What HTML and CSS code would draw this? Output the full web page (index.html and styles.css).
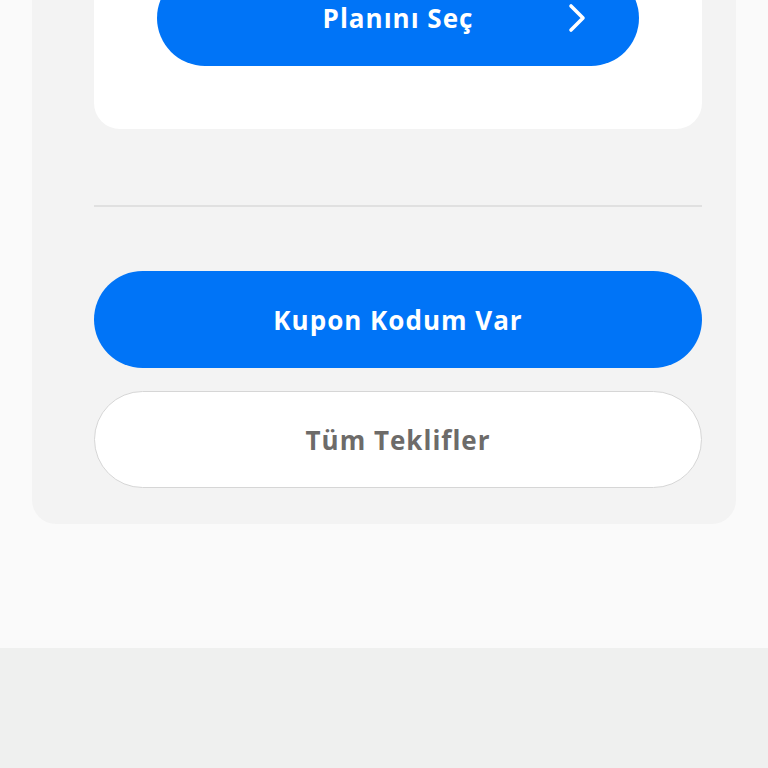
FILE: index.html
```html
<!DOCTYPE html>
<html lang="tr">
<head>
    <meta charset="UTF-8">
    <meta name="viewport" content="width=device-width, initial-scale=1.0">
    <title>Planlar</title>
    <link rel="stylesheet" href="styles.css">
</head>
<body>
    <div class="page">
        <div class="offer-panel">
            <div class="plan-card">
                <button class="btn btn-primary plan-button">
                    Planını Seç
                    <svg class="chevron" width="20" height="30" viewBox="0 0 20 30">
                        <path d="M4 3 L16 15 L4 27" fill="none" stroke="#fff" stroke-width="3.6" stroke-linecap="round" stroke-linejoin="round"/>
                    </svg>
                </button>
            </div>

            <div class="divider"></div>

            <div class="actions">
                <button class="btn btn-primary">Kupon Kodum Var</button>
                <button class="btn btn-outline">Tüm Teklifler</button>
            </div>
        </div>
    </div>
    <div class="footer-area"></div>
</body>
</html>
```

FILE: styles.css
```css
:root {
    --page-bg: #fafafa;
    --footer-bg: #eff0ef;
    --panel-bg: #f3f3f3;
    --card-bg: #ffffff;
    --blue: #0074f7;
    --muted-text: #6d6b69;
    --border: #d6d6d6;
}

body {
    margin: 0;
    font-family: "Open Sans", "Liberation Sans", sans-serif;
    background-color: var(--footer-bg);
    overflow: hidden;
}

.page {
    display: flow-root;
    background-color: var(--page-bg);
    height: 648px;
    padding: 0 32px;
    box-sizing: border-box;
}

.offer-panel {
    margin-top: -93px;
    background-color: var(--panel-bg);
    border-radius: 0 0 24px 24px;
    padding: 0 34px 36px 62px;
}

.plan-card {
    background-color: var(--card-bg);
    border-radius: 0 0 26px 26px;
    padding: 63px;
}

.divider {
    height: 2px;
    background-color: #e0e0e0;
    margin: 76px 0 64px;
}

.actions {
    display: flex;
    flex-direction: column;
    gap: 23px;
}

.btn {
    display: flex;
    align-items: center;
    justify-content: center;
    width: 100%;
    height: 97px;
    border-radius: 49px;
    border: none;
    font-family: inherit;
    font-size: 26px;
    font-weight: 700;
    letter-spacing: 1px;
    cursor: pointer;
}

.btn-primary {
    background-color: var(--blue);
    color: #fff;
}

.btn-outline {
    background-color: #fff;
    color: var(--muted-text);
    border: 1px solid var(--border);
}

.plan-button {
    position: relative;
    height: 96px;
}

.chevron {
    position: absolute;
    right: 52px;
    top: 50%;
    transform: translateY(-50%);
}
```
